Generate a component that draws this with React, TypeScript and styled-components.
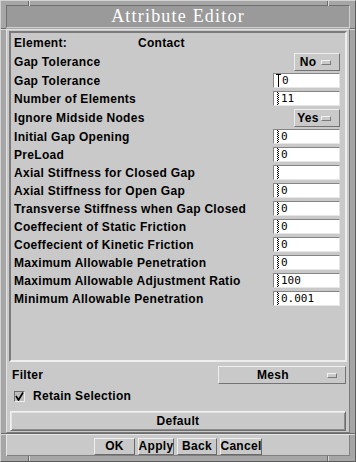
import React from 'react';
import styled, {createGlobalStyle} from 'styled-components';

const GlobalStyle = createGlobalStyle`
  html, body {
    margin: 0;
    padding: 0;
    background: #a6a6a6;
  }
  body {
    font-family: "Liberation Sans", Arial, sans-serif;
  }
`;

const Frame = styled('div')`
  position: relative;
  width: 356px;
  height: 462px;
  box-sizing: border-box;
  padding: 4px 5px 5px 5px;
  background: #a6a6a6;
  border-top: 1px solid #d2d2d2;
  border-left: 1px solid #d2d2d2;
  border-right: 1px solid #5c5c5c;
  border-bottom: 1px solid #5c5c5c;
  display: flex;
  flex-direction: column;
`;

const Notch = styled('div')<{$v?: boolean}>`
  position: absolute;
  background: #6c6c6c;
  box-shadow: ${p => p.$v ? '1px 0 0 #d8d8d8' : '0 1px 0 #d8d8d8'};
  width: ${p => p.$v ? '1px' : '5px'};
  height: ${p => p.$v ? '5px' : '1px'};
`;

const TitleBar = styled('div')`
  height: 23px;
  box-sizing: border-box;
  background: #9a9a9a;
  border-top: 1px solid #707070;
  border-left: 1px solid #707070;
  border-right: 1px solid #cfcfcf;
  border-bottom: 1px solid #cfcfcf;
  display: flex;
  align-items: center;
  justify-content: center;
  color: #ffffff;
  font-family: "Liberation Serif", "Times New Roman", serif;
  font-size: 18px;
  letter-spacing: 1.2px;
`;

const Client = styled('div')`
  margin-top: 1px;
  height: 404px;
  box-sizing: border-box;
  background: #c9c9c9;
  border-top: 1px solid #e2e2e2;
  border-left: 1px solid #e2e2e2;
  border-right: 1px solid #7a7a7a;
  border-bottom: 1px solid #7a7a7a;
  padding: 1px 2px;
  display: flex;
  flex-direction: column;
`;

const FormPanel = styled('div')`
  height: 331px;
  box-sizing: border-box;
  border-top: 2px solid #7b7b7b;
  border-left: 2px solid #7b7b7b;
  border-right: 2px solid #eeeeee;
  border-bottom: 2px solid #eeeeee;
  padding: 0 5px 0 3px;
  display: flex;
  flex-direction: column;
`;

const Row = styled('div')<{$h: number; $mb?: number}>`
  height: ${p => p.$h}px;
  margin-bottom: ${p => p.$mb || 0}px;
  display: flex;
  align-items: center;
  justify-content: space-between;
`;

const Label = styled('span')<{$w?: number}>`
  font-size: 12px;
  font-weight: bold;
  letter-spacing: 0.3px;
  color: #000;
  white-space: nowrap;
  width: ${p => p.$w ? `${p.$w}px` : 'auto'};
`;

const ElementRow = styled('div')`
  height: 20px;
  display: flex;
  align-items: center;
`;

const TextField = styled('div')`
  width: 67px;
  height: 15px;
  box-sizing: border-box;
  background: #ffffff;
  border-top: 1px solid #858585;
  border-left: 1px solid #858585;
  border-right: 1px solid #e6e6e6;
  border-bottom: 1px solid #e6e6e6;
  padding-left: 2px;
  display: flex;
  align-items: center;
  font-family: "DejaVu Sans Mono", "Liberation Mono", monospace;
  font-size: 11px;
  color: #000;
  overflow: hidden;
`;

const DottedCaret = styled('span')`
  display: inline-block;
  width: 2px;
  height: 13px;
  margin: 0 2px 0 1px;
  background:
    repeating-linear-gradient(to bottom, #000 0 1px, transparent 1px 2px) left / 1px 100% no-repeat,
    repeating-linear-gradient(to bottom, transparent 0 1px, #000 1px 2px) right / 1px 100% no-repeat;
`;

const IBeam = () => (
  <svg width="5" height="14" viewBox="0 0 5 14" style={{marginRight: 1, flex: 'none'}}>
    <path d="M0 0.5H5M0 13.5H5M2.5 0V14" stroke="#000" strokeWidth="1" fill="none"/>
  </svg>
);

const OptionButton = styled('div')<{$w: number}>`
  width: ${p => p.$w}px;
  height: 18px;
  box-sizing: border-box;
  background: #c9c9c9;
  border-top: 1px solid #eeeeee;
  border-left: 1px solid #eeeeee;
  border-right: 1px solid #737373;
  border-bottom: 1px solid #737373;
  display: flex;
  align-items: center;
  padding-right: 8px;
  font-size: 12px;
  font-weight: bold;
  letter-spacing: 0.3px;
`;

const OptionText = styled('span')`
  flex: 1;
  text-align: center;
`;

const Indicator = styled('span')`
  width: 10px;
  height: 5px;
  box-sizing: border-box;
  border-top: 1px solid #f2f2f2;
  border-left: 1px solid #f2f2f2;
  border-right: 1px solid #7a7a7a;
  border-bottom: 1px solid #7a7a7a;
  background: #c9c9c9;
`;

const FilterRow = styled('div')`
  margin-top: 4px;
  height: 18px;
  padding: 0 1px 0 3px;
  display: flex;
  align-items: center;
  justify-content: space-between;
`;

const CheckRow = styled('div')`
  margin-top: 2px;
  height: 20px;
  display: flex;
  align-items: center;
  padding-left: 5px;
  gap: 8px;
`;

const CheckBox = styled('div')`
  width: 11px;
  height: 11px;
  box-sizing: border-box;
  border-top: 1px solid #6e6e6e;
  border-left: 1px solid #6e6e6e;
  border-right: 1px solid #eeeeee;
  border-bottom: 1px solid #eeeeee;
  background: #bdbdbd;
  display: flex;
  align-items: center;
  justify-content: center;
`;

const WideButton = styled('div')`
  margin: 5px 1px 0 1px;
  height: 20px;
  box-sizing: border-box;
  background: #c9c9c9;
  border-top: 1px solid #f0f0f0;
  border-left: 1px solid #f0f0f0;
  border-right: 1px solid #6f6f6f;
  border-bottom: 1px solid #6f6f6f;
  box-shadow: inset 1px 1px 0 #e4e4e4, inset -1px -1px 0 #8c8c8c;
  display: flex;
  align-items: center;
  justify-content: center;
  font-size: 12px;
  font-weight: bold;
  letter-spacing: 0.3px;
`;

const ActionBar = styled('div')`
  height: 23px;
  box-sizing: border-box;
  background: #c9c9c9;
  border-top: 1px solid #6a6a6a;
  box-shadow: inset 1px 1px 0 #e6e6e6, inset -1px -1px 0 #808080;
  display: flex;
  align-items: center;
  justify-content: center;
  gap: 3px;
  padding-top: 2px;
`;

const PushButton = styled('div')<{$w: number}>`
  width: ${p => p.$w}px;
  height: 17px;
  box-sizing: border-box;
  background: #c9c9c9;
  border-top: 1px solid #efefef;
  border-left: 1px solid #efefef;
  border-right: 1px solid #6a6a6a;
  border-bottom: 1px solid #6a6a6a;
  display: flex;
  align-items: center;
  justify-content: center;
  font-size: 12px;
  font-weight: bold;
  letter-spacing: 0.3px;
`;

type Field =
    | {kind: 'option'; label: string; value: string}
    | {kind: 'text'; label: string; value: string; active?: boolean};

const fields: Field[] = [
    {kind: 'option', label: 'Gap Tolerance', value: 'No'},
    {kind: 'text', label: 'Gap Tolerance', value: '0', active: true},
    {kind: 'text', label: 'Number of Elements', value: '11'},
    {kind: 'option', label: 'Ignore Midside Nodes', value: 'Yes'},
    {kind: 'text', label: 'Initial Gap Opening', value: '0'},
    {kind: 'text', label: 'PreLoad', value: '0'},
    {kind: 'text', label: 'Axial Stiffness for Closed Gap', value: ''},
    {kind: 'text', label: 'Axial Stiffness for Open Gap', value: '0'},
    {kind: 'text', label: 'Transverse Stiffness when Gap Closed', value: '0'},
    {kind: 'text', label: 'Coeffecient of Static Friction', value: '0'},
    {kind: 'text', label: 'Coeffecient of Kinetic Friction', value: '0'},
    {kind: 'text', label: 'Maximum Allowable Penetration', value: '0'},
    {kind: 'text', label: 'Maximum Allowable Adjustment Ratio', value: '100'},
    {kind: 'text', label: 'Minimum Allowable Penetration', value: '0.001'},
];

const App = () => {
    return (
        <>
            <GlobalStyle/>
            <Frame>
                <Notch $v style={{left: 27, top: 0}}/>
                <Notch $v style={{left: 326, top: 0}}/>
                <Notch $v style={{left: 27, bottom: 0}}/>
                <Notch $v style={{left: 326, bottom: 0}}/>
                <Notch style={{left: 0, top: 27}}/>
                <Notch style={{right: 0, top: 27}}/>
                <Notch style={{left: 0, top: 432}}/>
                <Notch style={{right: 0, top: 432}}/>

                <TitleBar>Attribute Editor</TitleBar>
                <Client>
                    <FormPanel>
                        <ElementRow>
                            <Label $w={124}>Element:</Label>
                            <Label>Contact</Label>
                        </ElementRow>
                        {fields.map((f, i) => f.kind === 'option' ? (
                            <Row key={i} $h={18} $mb={2}>
                                <Label>{f.label}</Label>
                                <OptionButton $w={46}>
                                    <OptionText>{f.value}</OptionText>
                                    <Indicator/>
                                </OptionButton>
                            </Row>
                        ) : (
                            <Row key={i} $h={15} $mb={3}>
                                <Label>{f.label}</Label>
                                <TextField>
                                    {f.active ? <IBeam/> : <DottedCaret/>}
                                    {f.value}
                                </TextField>
                            </Row>
                        ))}
                    </FormPanel>
                    <FilterRow>
                        <Label>Filter</Label>
                        <OptionButton $w={128}>
                            <OptionText>Mesh</OptionText>
                            <Indicator/>
                        </OptionButton>
                    </FilterRow>
                    <CheckRow>
                        <CheckBox>
                            <svg width="9" height="9" viewBox="0 0 9 9">
                                <path d="M1 4L3.5 8L8 0.5" stroke="#000" strokeWidth="1.6" fill="none"/>
                            </svg>
                        </CheckBox>
                        <Label>Retain Selection</Label>
                    </CheckRow>
                    <WideButton>Default</WideButton>
                </Client>
                <ActionBar>
                    <PushButton $w={41}>OK</PushButton>
                    <PushButton $w={36}>Apply</PushButton>
                    <PushButton $w={40}>Back</PushButton>
                    <PushButton $w={42}>Cancel</PushButton>
                </ActionBar>
            </Frame>
        </>
    );
};

export default App;
